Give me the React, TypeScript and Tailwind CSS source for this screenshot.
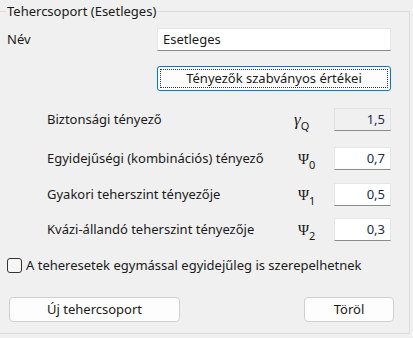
import React from 'react';

const rows = [
  { label: 'Biztonsági tényező', sym: 'γ', sub: 'Q', value: '1,5', disabled: true, mt: 'mt-[17px]' },
  { label: 'Egyidejűségi (kombinációs) tényező', sym: 'Ψ', sub: '0', value: '0,7', disabled: false, mt: 'mt-[16px]' },
  { label: 'Gyakori teherszint tényezője', sym: 'Ψ', sub: '1', value: '0,5', disabled: false, mt: 'mt-[13px]' },
  { label: 'Kvázi-állandó teherszint tényezője', sym: 'Ψ', sub: '2', value: '0,3', disabled: false, mt: 'mt-[12px]' },
];

const App: React.FC = () => {
  return (
    <div
      className="w-[413px] h-[338px] bg-[#f0f0f0] pt-[3px] overflow-hidden text-[13px] text-[#1a1a1a]"
      style={{ fontFamily: '"Noto Sans", "Liberation Sans", sans-serif' }}
    >
      <fieldset className="-ml-px w-[411px] h-[331px] border border-[#dcdcdc]">
        <legend className="ml-[6px] px-px leading-[16px]">Tehercsoport (Esetleges)</legend>

        {/* név */}
        <div className="flex items-center mt-[9px] h-[23px]">
          <span className="w-[157px] pl-[7px]">Név</span>
          <div className="w-[234px] h-[23px] bg-white border border-[#e6e6e6] border-b-[#8a8a8a] flex items-center pl-[5px]">
            Esetleges
          </div>
        </div>

        <div className="flex mt-[15px] pl-[157px]">
          <button className="w-[234px] h-[25px] bg-[#fdfdfd] border border-[#0078d7] rounded-[3px] p-[2px]">
            <div className="w-full h-full border border-dotted border-[#333] flex items-center justify-center">
              Tényezők szabványos értékei
            </div>
          </button>
        </div>

        {rows.map((r) => (
          <div key={r.label} className={`flex items-center h-[23px] ${r.mt}`}>
            <span className="w-[294px] pl-[47px]">{r.label}</span>
            <span className="w-[40px] flex items-end">
              <span
                className={r.sym === 'γ' ? 'text-[17px] italic leading-[18px]' : 'text-[15px] leading-[18px] pl-[4px]'}
                style={{ fontFamily: '"Liberation Serif", serif' }}
              >
                {r.sym}
              </span>
              <span className="text-[11px] leading-[12px] -mb-[3px]">{r.sub}</span>
            </span>
            <div
              className={`w-[57px] h-[23px] border border-b-[#8a8a8a] flex items-center justify-end pr-[5px] text-[#1c2a4c] ${
                r.disabled ? 'bg-[#f0f0f0] border-[#e2e2e2]' : 'bg-white border-[#e6e6e6]'
              }`}
            >
              {r.value}
            </div>
          </div>
        ))}

        <label className="flex items-center mt-[17px] h-[15px] pl-[7px]">
          <span className="w-[15px] h-[15px] border border-[#333] rounded-[3px] bg-[#f6f6f6]" />
          <span className="ml-[4px]">A teheresetek egymással egyidejűleg is szerepelhetnek</span>
        </label>

        <div className="flex mt-[24px] h-[25px]">
          <button className="ml-[9px] w-[171px] h-[25px] bg-[#fdfdfd] border border-[#d0d0d0] rounded-[4px] flex items-center justify-center">
            Új tehercsoport
          </button>
          <button className="ml-[124px] w-[90px] h-[25px] bg-[#fdfdfd] border border-[#d0d0d0] rounded-[4px] flex items-center justify-center">
            Töröl
          </button>
        </div>
      </fieldset>
    </div>
  );
};

export default App;
